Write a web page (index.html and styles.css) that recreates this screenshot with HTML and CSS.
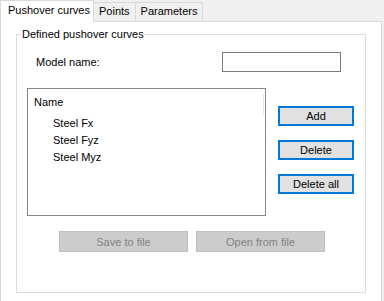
FILE: index.html
```html
<!DOCTYPE html>
<html lang="en">

<head>
    <meta charset="UTF-8">
    <title>Pushover curves</title>
    <link rel="stylesheet" href="styles.css">
</head>

<body>
    <div class="tabs">
        <div class="tab active">Pushover curves</div>
        <div class="tab">Points</div>
        <div class="tab">Parameters</div>
    </div>
    <div class="panel">
        <fieldset class="group">
            <legend>Defined pushover curves</legend>
            <div class="row-model">
                <label>Model name:</label>
                <input type="text" class="model-input">
            </div>
            <div class="row-list">
                <div class="list">
                    <div class="list-header">Name</div>
                    <div class="item">Steel Fx</div>
                    <div class="item">Steel Fyz</div>
                    <div class="item">Steel Myz</div>
                </div>
                <div class="side-buttons">
                    <button class="btn">Add</button>
                    <button class="btn">Delete</button>
                    <button class="btn">Delete all</button>
                </div>
            </div>
            <div class="row-file">
                <button class="btn-off" disabled>Save to file</button>
                <button class="btn-off" disabled>Open from file</button>
            </div>
        </fieldset>
    </div>
</body>

</html>
```

FILE: styles.css
```css
body {
    margin: 0;
    background: #f0f0f0;
    color: #000;
    font-family: "Liberation Sans", Arial, sans-serif;
    font-size: 11px;
    width: 382px;
}

.tabs {
    display: flex;
    align-items: flex-end;
    height: 21px;
    position: relative;
    z-index: 1;
}

.tab {
    height: 19px;
    line-height: 17px;
    padding: 0 5px;
    box-sizing: border-box;
    border: 1px solid #d9d9d9;
    border-bottom: none;
    border-left: none;
    background: #f0f0f0;
    white-space: nowrap;
}

.tab.active {
    height: 22px;
    line-height: 19px;
    padding: 0 0 0 7px;
    width: 94px;
    background: #fff;
    border-left: 1px solid #d9d9d9;
    margin-bottom: -1px;
}

.panel {
    background: #fff;
    border: 1px solid #d9d9d9;
    height: 277px;
    padding: 6px 15px 0 15px;
}

.group {
    margin: 0;
    padding: 0 0 40px 0;
    border: 1px solid #dcdcdc;
    min-width: 0;
}

.group legend {
    margin-left: 4px;
    padding: 0 1px;
    line-height: 12px;
}

.row-model {
    display: flex;
    align-items: center;
    justify-content: space-between;
    padding: 0 24px 0 19px;
    margin-top: 12px;
}

.model-input {
    width: 119px;
    height: 20px;
    box-sizing: border-box;
    border: 1px solid #7a7a7a;
    margin: 0;
    padding: 0 3px;
    font: inherit;
}

.row-list {
    display: flex;
    margin-top: 16px;
    padding-left: 10px;
}

.list {
    width: 239px;
    height: 128px;
    box-sizing: border-box;
    border: 1px solid #828790;
    padding-top: 5px;
}

.list-header {
    height: 21px;
    line-height: 16px;
    padding-left: 6px;
    margin-right: 1px;
    border-right: 1px solid #e5e5e5;
}

.item {
    height: 17px;
    line-height: 17px;
    padding-left: 25px;
}

.side-buttons {
    display: flex;
    flex-direction: column;
    gap: 14px;
    margin: 18px 0 0 12px;
}

.btn {
    width: 76px;
    height: 20px;
    box-sizing: border-box;
    border: 2px solid #0078d7;
    background: #e1e1e1;
    font: inherit;
    padding: 0;
    color: #000;
}

.row-file {
    display: flex;
    gap: 8px;
    margin-top: 15px;
    padding-left: 42px;
}

.btn-off {
    width: 129px;
    height: 21px;
    box-sizing: border-box;
    border: 1px solid #bfbfbf;
    background: #cccccc;
    color: #838383;
    font: inherit;
    padding: 0;
}
```
